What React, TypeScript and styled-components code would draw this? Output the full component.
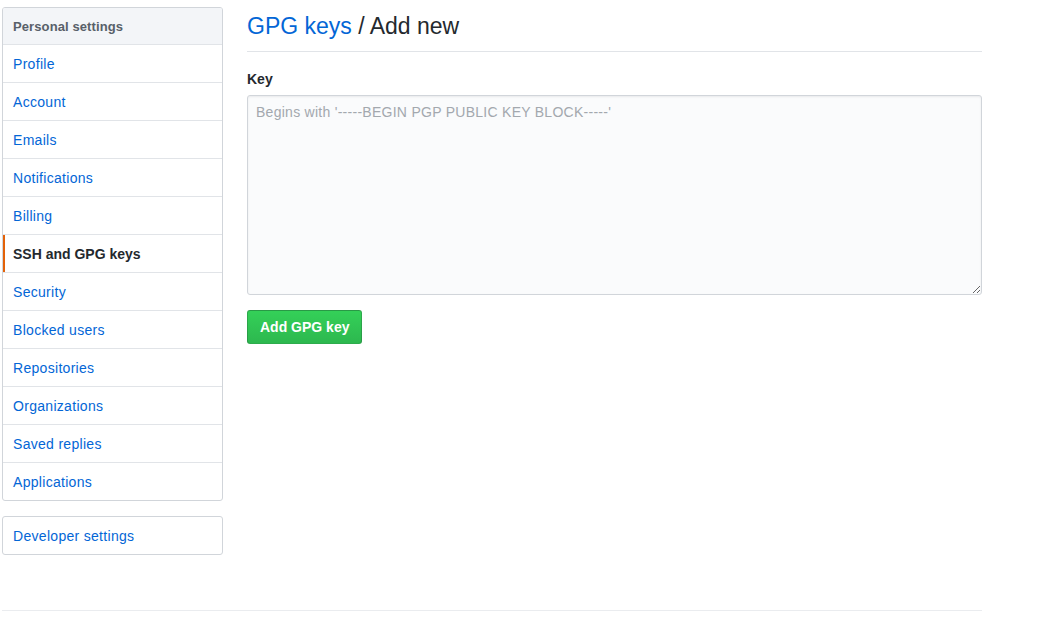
import React from "react";
import styled, { createGlobalStyle } from "styled-components";

const Global = createGlobalStyle`
  html, body { margin: 0; padding: 0; background: #fff; }
  body {
    font-family: "Liberation Sans", Arial, Helvetica, sans-serif;
    font-size: 14px;
    line-height: 1.5;
    color: #24292e;
  }
  * { box-sizing: border-box; }
`;

const Page = styled.div`
  width: 980px;
  margin-left: 2px;
  padding-top: 7px;
`;

const Layout = styled.div`
  display: flex;
  gap: 24px;
  align-items: flex-start;
`;

const Sidebar = styled.div`
  width: 221px;
  flex: none;
  display: flex;
  flex-direction: column;
  gap: 15px;
`;

const Menu = styled.nav`
  border: 1px solid #d1d5da;
  border-radius: 3px;
  background: #fff;
  display: flex;
  flex-direction: column;
  overflow: hidden;
`;

const MenuHeading = styled.div`
  padding: 9px 10px 7px;
  font-size: 13px;
  line-height: 20px;
  font-weight: bold;
  color: #586069;
  background: #f3f5f8;
  border-bottom: 1px solid #e1e4e8;
  letter-spacing: 0.1px;
`;

const MenuItem = styled.a<{ $selected?: boolean }>`
  display: block;
  padding: 9px 10px 7px;
  line-height: 21px;
  font-size: 14px;
  text-decoration: none;
  color: ${(p) => (p.$selected ? "#24292e" : "#0366d6")};
  font-weight: ${(p) => (p.$selected ? "bold" : "normal")};
  letter-spacing: ${(p) => (p.$selected ? "0" : "0.3px")};
  border-bottom: 1px solid #e1e4e8;
  position: relative;
  cursor: pointer;
  &:last-child { border-bottom: none; }
  ${(p) =>
    p.$selected
      ? `&::before {
      content: "";
      position: absolute;
      left: 0; top: 0; bottom: 0;
      width: 2px;
      background: #e36209;
    }`
      : ""}
`;

const Main = styled.main`
  width: 735px;
  flex: none;
`;

const Subhead = styled.div`
  padding-bottom: 8px;
  margin-bottom: 16px;
  border-bottom: 1px solid #e1e4e8;
`;

const Heading = styled.h2`
  margin: 0;
  padding-top: 3px;
  font-size: 23px;
  line-height: 33px;
  font-weight: normal;
  color: #24292e;
`;

const HeadingLink = styled.a`
  color: #0366d6;
  text-decoration: none;
`;

const Label = styled.label`
  display: block;
  font-weight: bold;
  font-size: 14px;
  line-height: 21px;
  padding-top: 1px;
  margin-bottom: 5px;
`;

const KeyArea = styled.textarea`
  display: block;
  width: 735px;
  height: 200px;
  padding: 6px 8px;
  font-family: "Liberation Sans", Arial, Helvetica, sans-serif;
  font-size: 14px;
  line-height: 20px;
  letter-spacing: 0.27px;
  color: #24292e;
  background: #fafbfc;
  border: 1px solid #d1d5da;
  border-radius: 3px;
  box-shadow: inset 0 1px 2px rgba(27, 31, 35, 0.075);
  outline: none;
  resize: vertical;
  margin: 0 0 15px 0;
  &::placeholder { color: #a3a8ae; }
`;

const PrimaryButton = styled.button`
  display: inline-block;
  padding: 6px 12px;
  font-family: "Liberation Sans", Arial, Helvetica, sans-serif;
  font-size: 14px;
  line-height: 20px;
  font-weight: bold;
  color: #fff;
  background-color: #2cbe4e;
  background-image: linear-gradient(-180deg, #34d058 0%, #2db84f 100%);
  border: 1px solid rgba(27, 31, 35, 0.2);
  border-radius: 3px;
  cursor: pointer;
`;

const Footer = styled.div`
  margin-top: 55px;
  border-top: 1px solid #eaecef;
  height: 22px;
`;

const items = [
  "Profile",
  "Account",
  "Emails",
  "Notifications",
  "Billing",
  "SSH and GPG keys",
  "Security",
  "Blocked users",
  "Repositories",
  "Organizations",
  "Saved replies",
  "Applications",
];

export default function App() {
  return (
    <>
      <Global />
      <Page>
        <Layout>
          <Sidebar>
            <Menu>
              <MenuHeading>Personal settings</MenuHeading>
              {items.map((it) => (
                <MenuItem key={it} $selected={it === "SSH and GPG keys"}>
                  {it}
                </MenuItem>
              ))}
            </Menu>
            <Menu>
              <MenuItem>Developer settings</MenuItem>
            </Menu>
          </Sidebar>
          <Main>
            <Subhead>
              <Heading>
                <HeadingLink>GPG keys</HeadingLink> / Add new
              </Heading>
            </Subhead>
            <form onSubmit={(e) => e.preventDefault()}>
              <Label htmlFor="gpg-key">Key</Label>
              <KeyArea
                id="gpg-key"
                placeholder="Begins with '-----BEGIN PGP PUBLIC KEY BLOCK-----'"
              />
              <PrimaryButton type="submit">Add GPG key</PrimaryButton>
            </form>
          </Main>
        </Layout>
        <Footer />
      </Page>
    </>
  );
}
